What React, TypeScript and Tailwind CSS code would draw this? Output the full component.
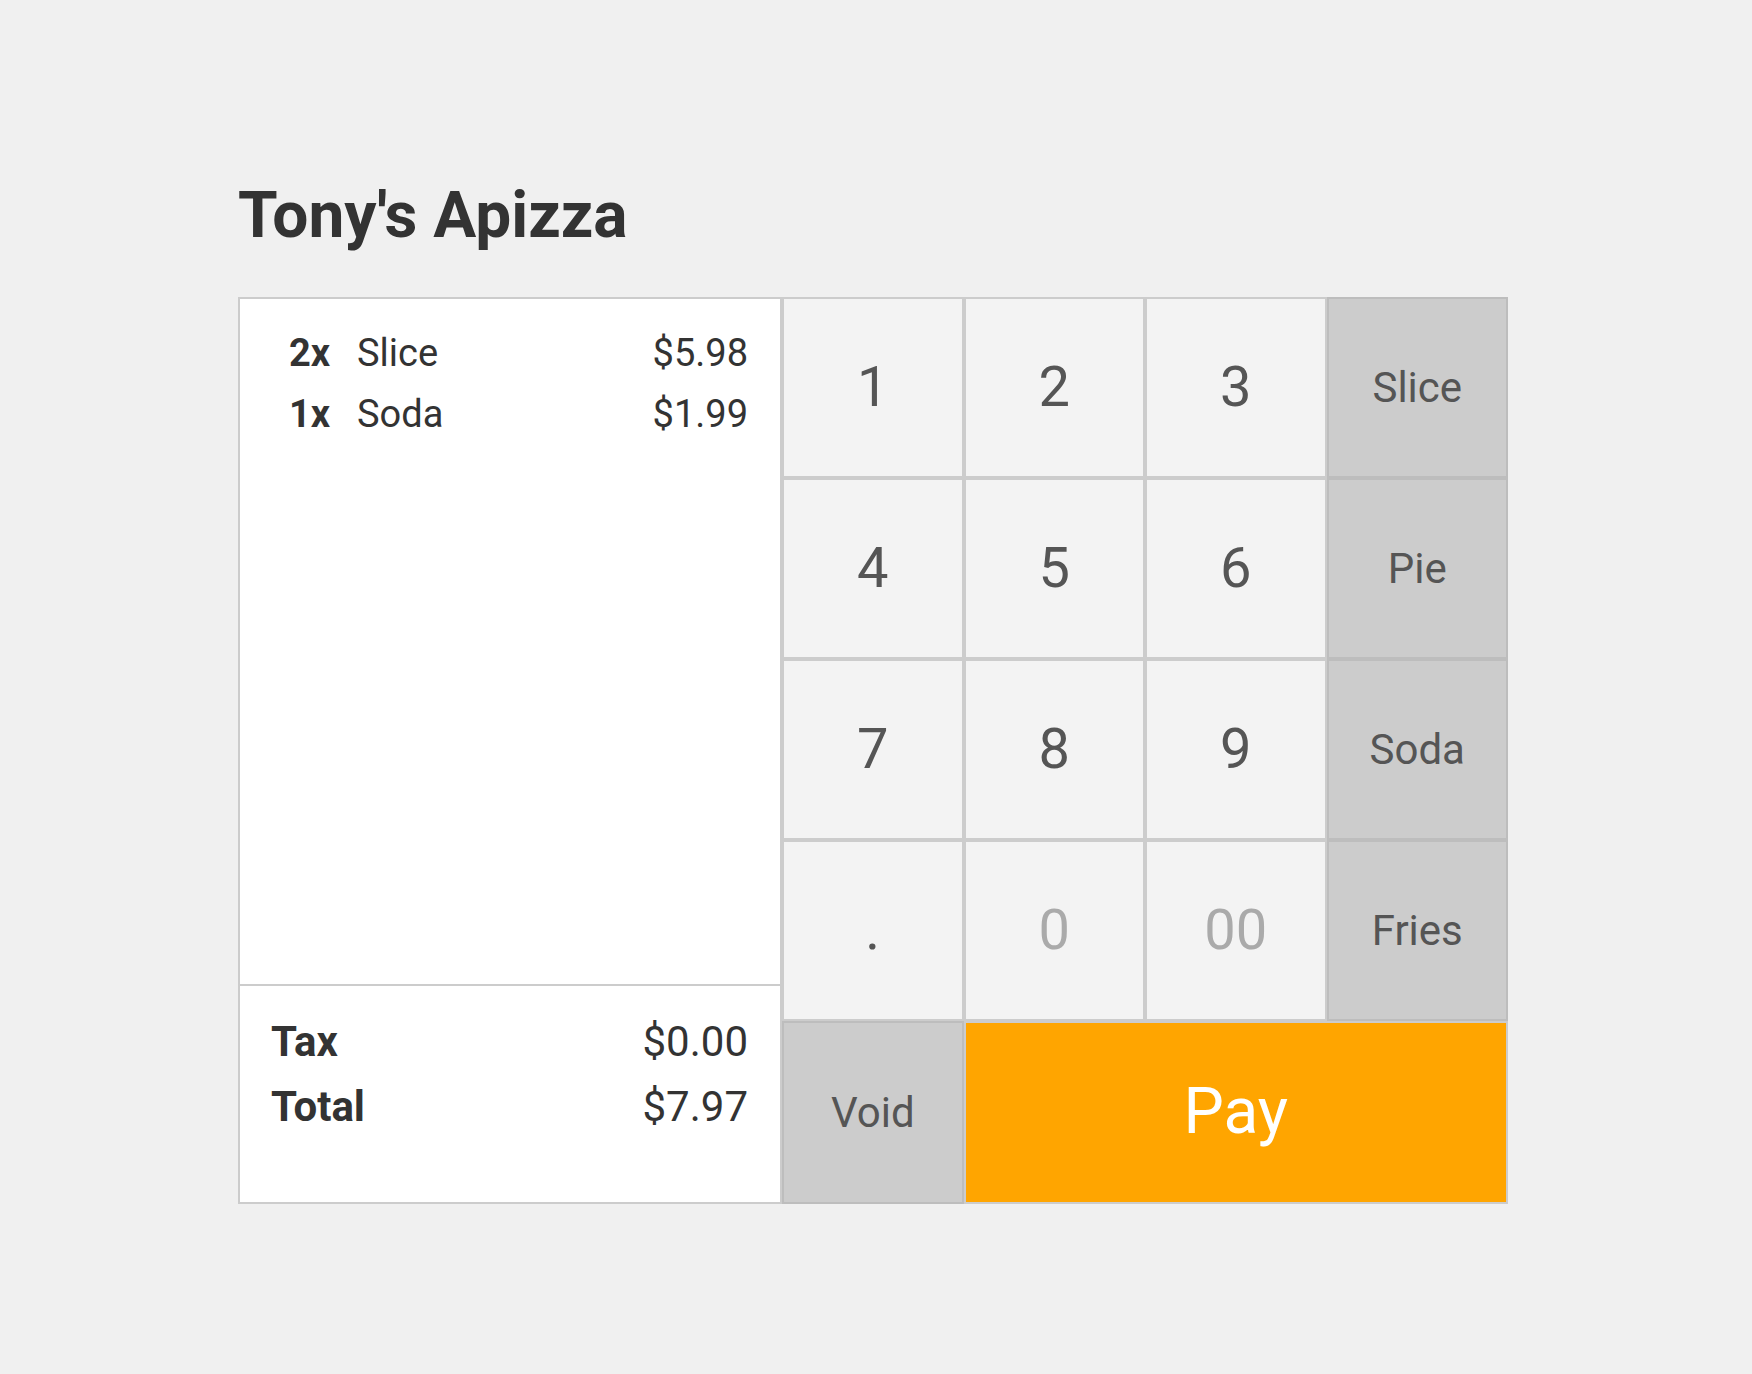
import React from "react";

const items = [
  { qty: "2x", name: "Slice", price: "$5.98" },
  { qty: "1x", name: "Soda", price: "$1.99" },
];

const keys = [
  { label: "1" },
  { label: "2" },
  { label: "3" },
  { label: "Slice", side: true },
  { label: "4" },
  { label: "5" },
  { label: "6" },
  { label: "Pie", side: true },
  { label: "7" },
  { label: "8" },
  { label: "9" },
  { label: "Soda", side: true },
  { label: "." },
  { label: "0", dim: true },
  { label: "00", dim: true },
  { label: "Fries", side: true },
];

function Key({ label, side, dim }: { label: string; side?: boolean; dim?: boolean }) {
  if (side) {
    return (
      <button className="h-[181px] flex items-center justify-center bg-[#cccccc] border-2 border-[#bdbdbd] text-[42px] text-[#555555]">
        {label}
      </button>
    );
  }
  return (
    <button
      className={`h-[181px] flex items-center justify-center bg-[#f3f3f3] border-2 border-[#cccccc] text-[56px] ${
        dim ? "text-[#aaaaaa]" : "text-[#555555]"
      }`}
    >
      {label}
    </button>
  );
}

export default function App() {
  return (
    <div className="min-h-screen bg-[#f0f0f0] pt-[178px] pl-[238px] font-['Roboto',sans-serif]">
      <h1 className="text-[64px] leading-[76.8px] font-bold text-[#333333]">Tony's Apizza</h1>

      <div className="mt-[42px] flex">
        <div className="w-[544px] h-[907px] flex flex-col bg-white border-2 border-[#cccccc]">
          <div className="flex-1 pt-[24px] pl-[31px] pr-[32px]">
            {items.map((item, index) => (
              <div className="flex text-[38px] leading-[61px] text-[#333333]" key={index}>
                <span className="w-[86px] pl-[18px] font-bold">{item.qty}</span>
                <span className="flex-1">{item.name}</span>
                <span>{item.price}</span>
              </div>
            ))}
          </div>
          <div className="h-[218px] border-t-2 border-[#cccccc] pt-[23px] pl-[31px] pr-[32px] text-[42px] leading-[65px] text-[#333333]">
            <div className="flex justify-between">
              <span className="font-bold">Tax</span>
              <span>$0.00</span>
            </div>
            <div className="flex justify-between">
              <span className="font-bold">Total</span>
              <span>$7.97</span>
            </div>
          </div>
        </div>

        <div className="w-[726px] grid grid-cols-4">
          {keys.map((k, index) => (
            <Key key={index} label={k.label} side={k.side} dim={k.dim} />
          ))}
          <button className="h-[183px] flex items-center justify-center bg-[#cccccc] border-2 border-[#bdbdbd] text-[42px] text-[#555555]">
            Void
          </button>
          <button className="col-span-3 h-[183px] flex items-center justify-center bg-[#ffa500] border-2 border-[#cccccc] text-[64px] text-white">
            Pay
          </button>
        </div>
      </div>
    </div>
  );
}
